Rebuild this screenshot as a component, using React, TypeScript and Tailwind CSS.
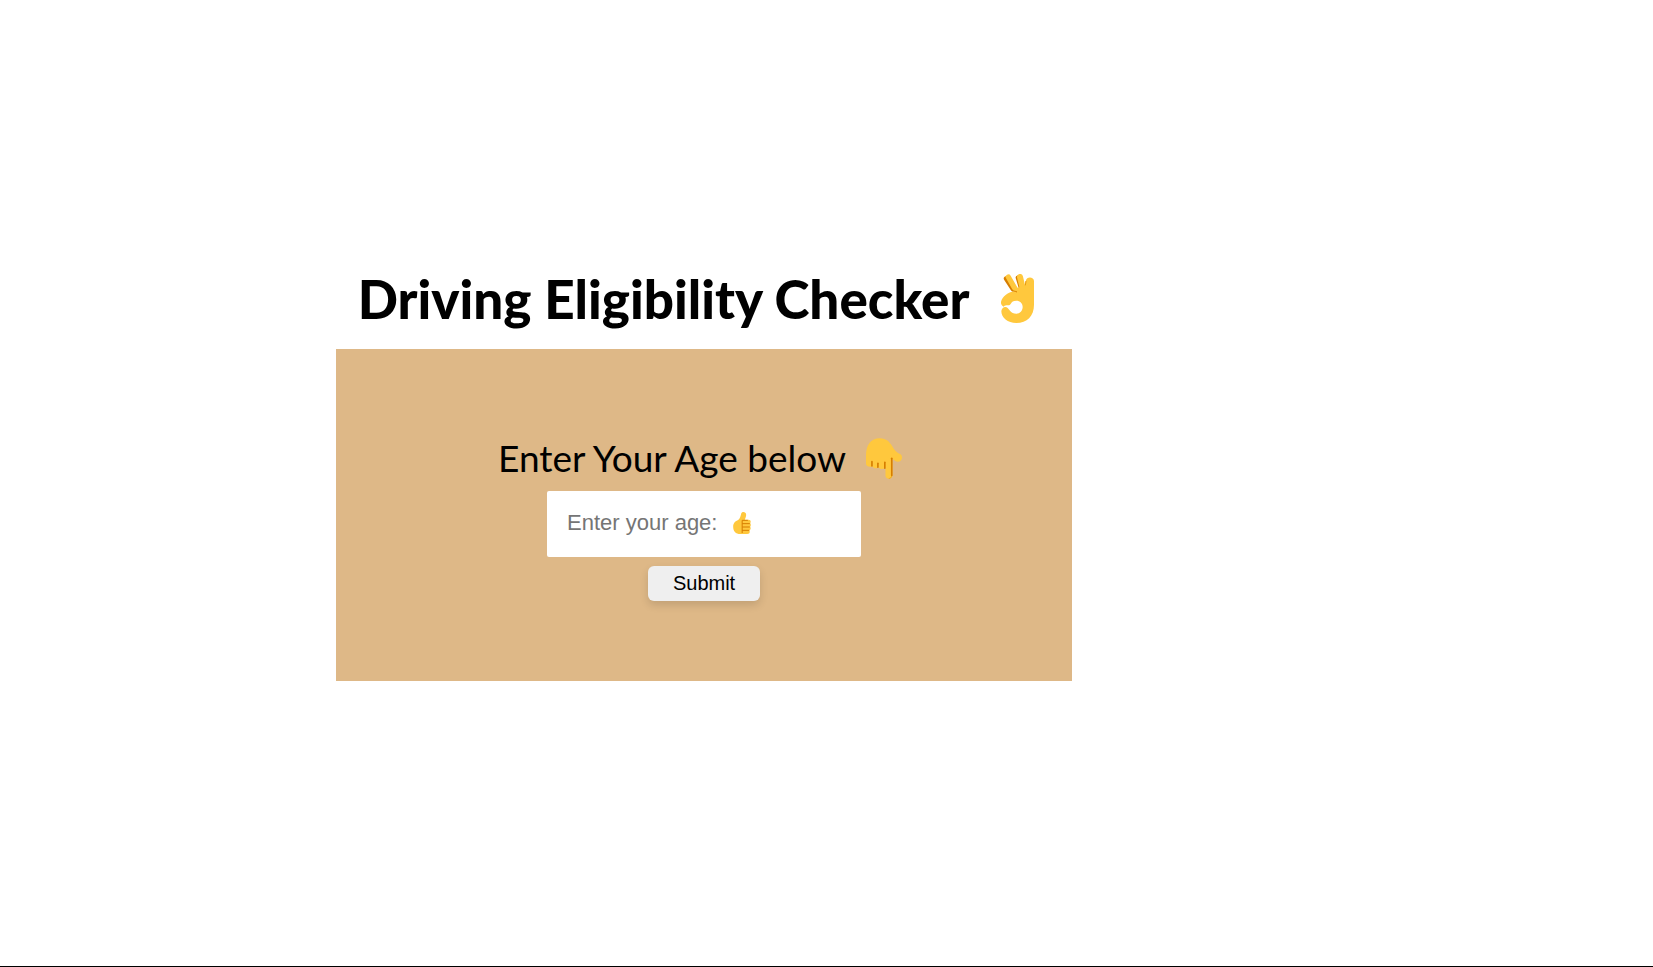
import { useState } from "react";

function OkHand() {
  return (
    <svg viewBox="30 27 99 147" className="h-[49px] w-[33px]" role="img" aria-label="OK hand">
      <g fill="none" strokeLinecap="round">
        <path d="M46 41 L66 72" stroke="#d67d00" strokeWidth="15" />
        <path d="M81 38 L90 68" stroke="#d67d00" strokeWidth="14" />
        <path d="M52 36 L75 76" stroke="#ffc83d" strokeWidth="16" />
        <path d="M87 36 L96 74" stroke="#ffc83d" strokeWidth="18" />
      </g>
      <path
        fill="#ffc83d"
        d="M105 46 C106 34 129 34 129 48 V119 C129 153 108 174 76 174 C50 174 31 158 31 139 C31 129 43 121 50 129 L57 137 C61 143 68 146 76 146 C87 146 95 137 95 126 C95 115 87 107 76 107 C66 107 63 110 59 117 C54 125 45 117 38 125 C31 122 28 115 31 107 C35 96 50 80 66 80 L76 79 L76 70 L100 62 Z"
      />
      <path d="M103 61 L105 48" fill="none" stroke="#e89a10" strokeWidth="3" />
      <path d="M62 74 C68 80 73 78 78 81" fill="none" stroke="#d67d00" strokeWidth="3" />
    </svg>
  );
}

function PointDown() {
  return (
    <svg viewBox="33 24 109 123" className="h-[41px] w-[36px]" role="img" aria-label="Pointing down">
      <path
        fill="#ffc83d"
        d="M33 77 C33 45 47 24 75 24 C94 24 105 35 112 48 C119 62 127 69 137 73 C144 77 143 88 137 93 C129 99 118 92 113 86 V138 C113 149 92 150 92 138 V111 C88 119 76 120 71 112 C66 118 54 115 52 109 C45 113 33 110 33 101 Z"
      />
      <g stroke="#d67d00" strokeWidth="5" fill="none" strokeLinecap="round">
        <path d="M51 95 V108" />
        <path d="M69 100 V112" />
        <path d="M90 97 V115" />
        <path d="M111 85 V137" />
      </g>
      <path d="M111 138 C110 144 106 146 102 146" fill="none" stroke="#e89a10" strokeWidth="2" />
    </svg>
  );
}

function ThumbUp() {
  return (
    <svg viewBox="24 21 53 66" className="h-[22px] w-[18px]" aria-hidden="true">
      <path
        fill="#ffc83d"
        d="M24 65 C24 54 31 48 39 45 C45 40 46 33 48 26 C49 19 63 19 63 29 C63 35 60 40 59 44 H70 C77 44 78 51 75 54 C78 58 77 63 75 65 C78 69 76 74 73 76 C75 82 73 87 66 87 H46 C31 87 24 78 24 65 Z"
      />
      <g stroke="#d67d00" strokeWidth="3" fill="none">
        <path d="M51 46 V84" />
        <path d="M51 46 H68 M51 56 H74 M51 66 H74 M51 76 H72" />
      </g>
    </svg>
  );
}

export default function App() {
  const [age, setAge] = useState("");

  return (
    <div className="flex min-h-screen flex-col border-b border-black bg-white text-black">
      <main className="ml-[20.33%] flex w-full max-w-[736px] flex-col pt-[268px] font-['Lato','Gill_Sans',sans-serif]">
        <h1 className="flex items-center justify-center gap-8 pr-4 pb-5 text-[53px] leading-[61px] font-black">
          Driving Eligibility Checker
          <OkHand />
        </h1>
        <form
          className="flex flex-col items-center bg-[#deb887] pt-20 pb-20"
          onSubmit={(event) => event.preventDefault()}
        >
          <label htmlFor="age" className="flex items-center gap-5 pt-0.5 pr-2 pb-1.5 text-[37px] leading-[54px]">
            Enter Your Age below
            <PointDown />
          </label>
          <div className="relative w-[314px] max-w-full font-['Liberation_Sans',sans-serif]">
            <input
              id="age"
              type="text"
              value={age}
              onChange={(event) => setAge(event.target.value)}
              placeholder="Enter your age:"
              className="block h-[66px] w-full rounded-xs bg-white px-5 pb-0.5 text-[22px] placeholder:text-[#757575]"
            />
            {age === "" && (
              <span className="pointer-events-none absolute top-[21px] left-[186px]">
                <ThumbUp />
              </span>
            )}
          </div>
          <button
            type="submit"
            className="mt-[9px] h-[35px] w-28 rounded-md bg-[#efefef] pb-0.5 font-['Liberation_Sans',sans-serif] text-xl shadow-[0_4px_8px_rgba(0,0,0,0.13)]"
          >
            Submit
          </button>
        </form>
      </main>
    </div>
  );
}
